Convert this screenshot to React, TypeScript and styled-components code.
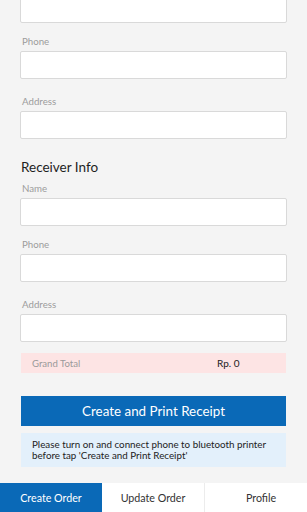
import React from "react";
import styled, { createGlobalStyle } from "styled-components";

const Global = createGlobalStyle`
  html, body { margin: 0; padding: 0; }
  body {
    background: #f4f4f4;
    font-family: Lato, "Open Sans", Arial, sans-serif;
  }
  * { box-sizing: border-box; }
`;

const Screen = styled.div`
  width: 307px;
  height: 512px;
  display: flex;
  flex-direction: column;
  background: #f4f4f4;
  overflow: hidden;
`;

const ScrollArea = styled.div`
  flex: 1;
  min-height: 0;
  overflow: hidden;
  display: flex;
  flex-direction: column;
  justify-content: flex-end;
`;

const Content = styled.div`
  flex-shrink: 0;
  display: flex;
  flex-direction: column;
  padding: 12px 0 16px;
`;

const SectionTitle = styled.h2<{ $top: number }>`
  margin: ${(p) => p.$top}px 21px 6px;
  font-size: 13.5px;
  line-height: 18px;
  font-weight: 400;
  color: #1e1e1e;
`;

const Field = styled.div<{ $top: number }>`
  display: flex;
  flex-direction: column;
  margin: ${(p) => p.$top}px 20px 0;
`;

const Label = styled.label`
  font-size: 9.7px;
  line-height: 12px;
  height: 12px;
  color: #9c9c9c;
  padding-left: 2px;
  margin-bottom: 4px;
`;

const Input = styled.input`
  height: 28px;
  width: 100%;
  border: 1px solid #d9d9d9;
  border-radius: 2px;
  background: #fff;
  font-family: inherit;
  font-size: 12px;
  padding: 0 8px;
  outline: none;
`;

const TotalRow = styled.div`
  margin: 11px 21px 0;
  height: 20px;
  background: #fde4e4;
  display: grid;
  grid-template-columns: 1fr 69px;
  align-items: center;
  padding-left: 11px;
`;

const TotalLabel = styled.span`
  color: #9a9a9a;
  font-size: 9.6px;
`;

const TotalValue = styled.span`
  color: #222;
  font-size: 10px;
`;

const PrimaryButton = styled.button`
  margin: 23px 21px 0;
  height: 30px;
  border: none;
  border-radius: 0;
  background: #0a69b7;
  color: #fff;
  font-family: inherit;
  font-size: 13.4px;
  cursor: pointer;
`;

const Notice = styled.div`
  margin: 7px 21px 0;
  height: 34px;
  padding: 6px 11px;
  background: #e3f0fb;
  color: #222;
  font-size: 9.8px;
  line-height: 11px;
`;

const Nav = styled.nav`
  height: 29px;
  flex-shrink: 0;
  display: grid;
  grid-template-columns: 102px 102px 1fr;
  background: #fff;
`;

const Tab = styled.button<{ $active?: boolean; $divider?: boolean; $shift?: number }>`
  border: none;
  border-left: ${(p) => (p.$divider ? "1px solid #ececec" : "none")};
  background: ${(p) => (p.$active ? "#0a69b7" : "#fff")};
  color: ${(p) => (p.$active ? "#fff" : "#333")};
  font-family: inherit;
  font-size: 10.7px;
  padding: 0 0 0 ${(p) => p.$shift ?? 0}px;
  cursor: pointer;
`;

type FieldProps = { label?: string; top: number };
const FormField = ({ label, top }: FieldProps) => (
  <Field $top={top}>
    {label && <Label>{label}</Label>}
    <Input type="text" />
  </Field>
);

export default function App() {
  return (
    <Screen>
      <Global />
      <ScrollArea>
        <Content>
          <FormField top={0} />
          <FormField label="Phone" top={12} />
          <FormField label="Address" top={16} />
          <SectionTitle $top={19}>Receiver Info</SectionTitle>
          <FormField label="Name" top={0} />
          <FormField label="Phone" top={12} />
          <FormField label="Address" top={16} />
          <TotalRow>
            <TotalLabel>Grand Total</TotalLabel>
            <TotalValue>Rp. 0</TotalValue>
          </TotalRow>
          <PrimaryButton>Create and Print Receipt</PrimaryButton>
          <Notice>
            Please turn on and connect phone to bluetooth printer
            <br />
            before tap 'Create and Print Receipt'
          </Notice>
        </Content>
      </ScrollArea>
      <Nav>
        <Tab $active>Create Order</Tab>
        <Tab>Update Order</Tab>
        <Tab $divider $shift={10}>Profile</Tab>
      </Nav>
    </Screen>
  );
}
